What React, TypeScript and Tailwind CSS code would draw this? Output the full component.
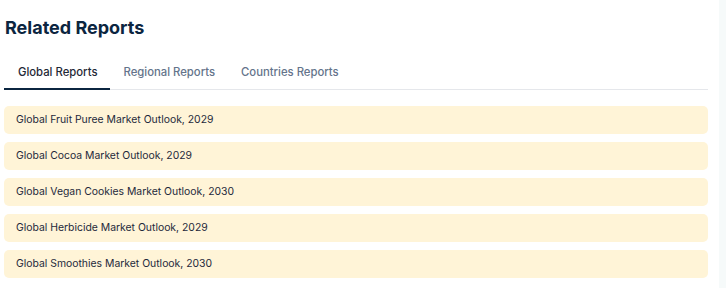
import React from "react";

const items = [
  "Global Fruit Puree Market Outlook, 2029",
  "Global Cocoa Market Outlook, 2029",
  "Global Vegan Cookies Market Outlook, 2030",
  "Global Herbicide Market Outlook, 2029",
  "Global Smoothies Market Outlook, 2030",
];

export default function App() {
  return (
    <div className="flex h-[288px] w-[726px] bg-white" style={{ fontFamily: "Inter, 'Noto Sans', sans-serif" }}>
      <div className="w-[704px] ml-[4px] pt-[16px]">
        <h2 className="text-[18px] leading-[24px] font-bold text-[#0b2540] pl-[1px]">Related Reports</h2>
        <div className="mt-[23px] flex border-b border-[#e5e7eb] text-[11.3px] leading-[16px] font-medium">
          <div className="pl-[14px] pr-[13px] pt-[1px] pb-[8px] text-[#1f2937] border-b-2 border-[#0b2540] -mb-px">Global Reports</div>
          <div className="px-[13px] pt-[1px] pb-[8px] text-[#64748b]">Regional Reports</div>
          <div className="px-[13px] pt-[1px] pb-[8px] text-[#64748b]">Countries Reports</div>
        </div>
        <div className="mt-[16px] flex flex-col gap-[8px]">
          {items.map((t) => (
            <div key={t} className="h-[28px] flex items-center rounded-[5px] bg-[#fff4d7] px-[12px] text-[10.4px] text-[#1e293b]">
              {t}
            </div>
          ))}
        </div>
      </div>
      <div className="ml-auto w-[7px] h-full bg-[#f6fafa]" />
    </div>
  );
}
